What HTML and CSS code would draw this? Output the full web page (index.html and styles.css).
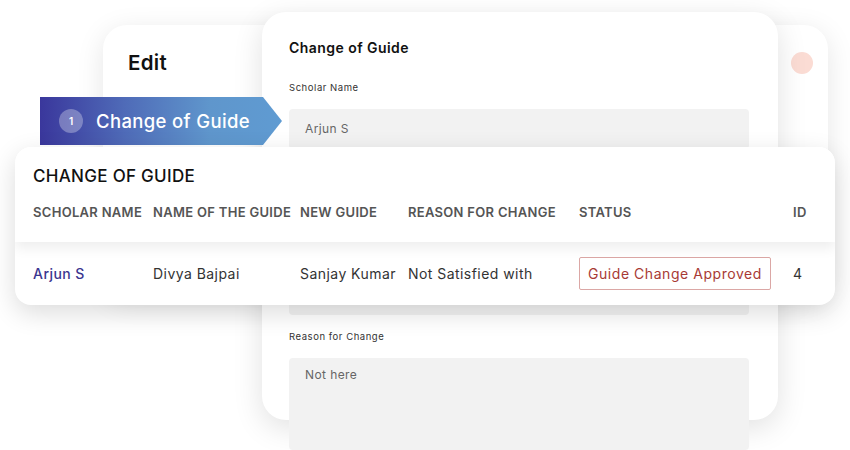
FILE: index.html
```html
<!DOCTYPE html>
<html lang="en">
<head>
<meta charset="utf-8">
<title>Change of Guide</title>
<link rel="stylesheet" href="styles.css">
</head>
<body>
<div class="stage">
  <section class="win win-edit">
    <h1 class="edit-title">Edit</h1>
    <span class="dot"></span>
  </section>

  <section class="win win-form">
    <h2 class="form-title">Change of Guide</h2>
    <div class="field">
      <label class="lbl">Scholar Name</label>
      <div class="input">Arjun S</div>
    </div>
    <div class="field">
      <div class="lbl-space"></div>
      <div class="input"></div>
    </div>
    <div class="field">
      <div class="lbl-space"></div>
      <div class="input"></div>
    </div>
    <div class="field">
      <label class="lbl">Reason for Change</label>
      <div class="input textarea">Not here</div>
    </div>
  </section>

  <div class="step-tab">
    <span class="step-num">1</span>
    <span class="step-label">Change of Guide</span>
  </div>

  <section class="win win-table">
    <div class="tbl-head">
      <h3 class="tbl-title">CHANGE OF GUIDE</h3>
      <div class="grid cols">
        <span>SCHOLAR NAME</span>
        <span>NAME OF THE GUIDE</span>
        <span>NEW GUIDE</span>
        <span>REASON FOR CHANGE</span>
        <span>STATUS</span>
        <span>ID</span>
      </div>
    </div>
    <div class="grid row">
      <span class="scholar">Arjun S</span>
      <span>Divya Bajpai</span>
      <span>Sanjay Kumar</span>
      <span>Not Satisfied with</span>
      <span><span class="badge">Guide Change Approved</span></span>
      <span>4</span>
    </div>
  </section>
</div>
</body>
</html>
```

FILE: styles.css
```css
* { box-sizing: border-box; margin: 0; padding: 0; }

html, body {
  width: 850px;
  height: 450px;
  background: #ffffff;
  overflow: hidden;
}

body {
  font-family: "Inter", "Open Sans", sans-serif;
  color: #222;
}

.stage {
  position: relative;
  width: 850px;
  height: 450px;
}

.win {
  position: absolute;
  background: #fff;
}

/* back window */
.win-edit {
  left: 103px;
  top: 25px;
  width: 725px;
  height: 270px;
  border-radius: 24px;
  box-shadow: 0 6px 28px rgba(0, 0, 0, 0.10);
  display: flex;
  justify-content: space-between;
  align-items: flex-start;
  padding: 25px 15px 0 25px;
}

.edit-title {
  font-size: 20.5px;
  font-weight: 600;
  line-height: 26px;
  letter-spacing: 0.3px;
  color: #111;
}

.dot {
  width: 22px;
  height: 22px;
  border-radius: 50%;
  background: #fbdcd4;
  margin-top: 2px;
}

/* form window */
.win-form {
  left: 262px;
  top: 12px;
  width: 516px;
  height: 408px;
  border-radius: 24px;
  box-shadow: 0 8px 30px rgba(0, 0, 0, 0.12);
  padding: 27px 29px 0 27px;
  display: flex;
  flex-direction: column;
}

.form-title {
  font-size: 14px;
  font-weight: 600;
  line-height: 18px;
  letter-spacing: 0.45px;
  color: #111;
  margin-bottom: 24px;
}

.field {
  display: flex;
  flex-direction: column;
  gap: 14px;
  margin-bottom: 15px;
}

.lbl {
  font-size: 9.5px;
  line-height: 14px;
  letter-spacing: 0.55px;
  color: #333;
}

.lbl-space {
  height: 14px;
}

.input {
  height: 40px;
  background: #f2f2f2;
  border-radius: 4px;
  padding: 0 16px 2px;
  display: flex;
  align-items: center;
  font-size: 12px;
  letter-spacing: 0.4px;
  color: #666;
}

.textarea {
  height: 92px;
  align-items: flex-start;
  padding-top: 9px;
}

/* step tab */
.step-tab {
  position: absolute;
  left: 40px;
  top: 97px;
  width: 242px;
  height: 48px;
  clip-path: polygon(0 0, calc(100% - 19px) 0, 100% 50%, calc(100% - 19px) 100%, 0 100%);
  background: linear-gradient(90deg, #3a379c 0%, #4f6bb8 35%, #5f96cc 70%, #5f9bd2 100%);
  display: flex;
  align-items: center;
  gap: 13px;
  padding-left: 19px;
}

.step-num {
  width: 24px;
  height: 24px;
  border-radius: 50%;
  background: rgba(255, 255, 255, 0.3);
  color: #fff;
  font-size: 10px;
  font-weight: 600;
  display: flex;
  align-items: center;
  justify-content: center;
}

.step-label {
  color: #fff;
  font-size: 18.5px;
  font-weight: 500;
  letter-spacing: 0.35px;
}

/* table window */
.win-table {
  left: 15px;
  top: 147px;
  width: 820px;
  height: 158px;
  border-radius: 16px;
  box-shadow: 0 8px 26px rgba(0, 0, 0, 0.14);
  overflow: hidden;
}

.tbl-head {
  height: 95px;
  padding: 17px 18px 0 18px;
  background: #fff;
  position: relative;
  z-index: 1;
  box-shadow: 0 6px 12px rgba(0, 0, 0, 0.07);
}

.tbl-title {
  font-size: 17px;
  font-weight: 500;
  line-height: 24px;
  letter-spacing: 0.3px;
  color: #111;
  margin-bottom: 14px;
}

.grid {
  display: grid;
  grid-template-columns: 120px 147px 108px 171px 214px auto;
  align-items: center;
}

.cols {
  font-size: 13px;
  font-weight: 600;
  color: #555;
  line-height: 20px;
  letter-spacing: 0.3px;
}

.row {
  padding: 15px 18px;
  font-size: 14px;
  letter-spacing: 0.45px;
  color: #333;
}

.scholar {
  color: #3b3690;
  font-weight: 500;
}

.badge {
  display: inline-flex;
  align-items: center;
  height: 33px;
  padding: 0 8px;
  border: 1px solid #dba7a5;
  border-radius: 2px;
  color: #a83a35;
  font-size: 14px;
  letter-spacing: 0.55px;
}
```
